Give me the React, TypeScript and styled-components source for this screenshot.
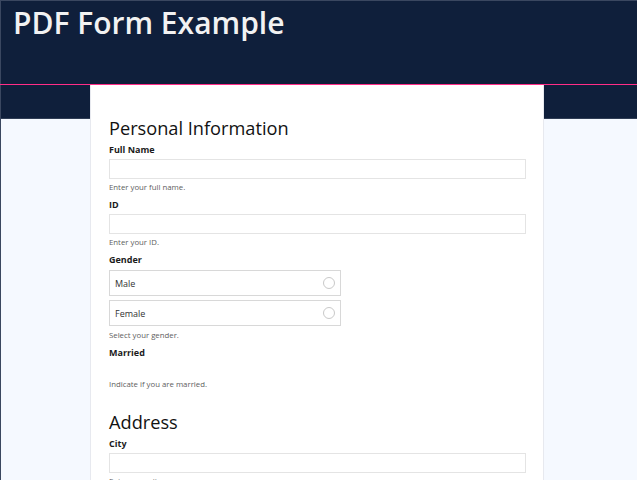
import React from "react";
import styled, { createGlobalStyle } from "styled-components";

const Global = createGlobalStyle`
  html, body { margin: 0; padding: 0; }
  body {
    font-family: "Open Sans", "Noto Sans", sans-serif;
    background: #f5f9ff;
  }
`;

const Page = styled.div`
  min-height: 480px;
  background: #f5f9ff;
`;

const Header = styled.header`
  height: 84px;
  box-sizing: border-box;
  background: #0f1f3b;
  border-top: 1px solid #3a4760;
  border-left: 1px solid #3a4760;
  padding: 2px 0 0 12px;
`;

const Accent = styled.div`
  height: 1px;
  background: #ff2d87;
`;

const Title = styled.h1`
  margin: 0;
  font-size: 30px;
  line-height: 40px;
  font-weight: 600;
  color: #f2f2f2;
  letter-spacing: 0;
`;

const Stage = styled.div`
  background: linear-gradient(to bottom, #0f1f3b 0, #0f1f3b 33px, #2f3d55 33px, #2f3d55 34px, #f5f9ff 34px);
  border-left: 1px solid #3a4760;
  padding-left: 89px;
`;

const Card = styled.main`
  width: 454px;
  box-sizing: border-box;
  background: #ffffff;
  border-left: 1px solid #e7e9ef;
  border-right: 1px solid #e7e9ef;
  padding: 31px 17px 40px 18px;
`;

const SectionTitle = styled.h2<{ $first?: boolean }>`
  margin: ${(p) => (p.$first ? "0" : "20px")} 0 4px 0;
  font-size: 18.2px;
  line-height: 24px;
  font-weight: 400;
  color: #121212;
`;

const Field = styled.div`
  display: flex;
  flex-direction: column;
  margin-bottom: 6px;
`;

const Label = styled.label`
  font-size: 9px;
  line-height: 12px;
  font-weight: 700;
  color: #1b1b1b;
  margin-bottom: 3px;
`;

const Input = styled.div`
  height: 20px;
  box-sizing: border-box;
  border: 1px solid #e4e4e4;
  background: #fff;
`;

const Help = styled.div`
  margin-top: 3px;
  font-size: 7.8px;
  line-height: 11px;
  color: #5e5e5e;
`;

const RadioGroup = styled.div`
  display: flex;
  flex-direction: column;
  gap: 4px;
  margin-top: 1px;
  margin-bottom: 1px;
`;

const RadioOption = styled.div`
  width: 232px;
  height: 26px;
  box-sizing: border-box;
  border: 1px solid #d8d8d8;
  display: flex;
  align-items: center;
  justify-content: space-between;
  padding: 0 5px 0 5px;
  font-size: 9px;
  color: #333;
`;

const Circle = styled.span`
  width: 10px;
  height: 10px;
  border: 1px solid #c9c9c9;
  border-radius: 50%;
  background: #fff;
`;

const CheckSpace = styled.div`
  height: 14px;
`;

export default function App() {
  return (
    <Page>
      <Global />
      <Header>
        <Title>PDF Form Example</Title>
      </Header>
      <Accent />
      <Stage>
        <Card>
          <SectionTitle $first>Personal Information</SectionTitle>
          <Field>
            <Label>Full Name</Label>
            <Input />
            <Help>Enter your full name.</Help>
          </Field>
          <Field>
            <Label>ID</Label>
            <Input />
            <Help>Enter your ID.</Help>
          </Field>
          <Field>
            <Label>Gender</Label>
            <RadioGroup>
              <RadioOption>
                Male
                <Circle />
              </RadioOption>
              <RadioOption>
                Female
                <Circle />
              </RadioOption>
            </RadioGroup>
            <Help>Select your gender.</Help>
          </Field>
          <Field>
            <Label>Married</Label>
            <CheckSpace />
            <Help>Indicate if you are married.</Help>
          </Field>
          <SectionTitle>Address</SectionTitle>
          <Field>
            <Label>City</Label>
            <Input />
            <Help>Enter your city.</Help>
          </Field>
        </Card>
      </Stage>
    </Page>
  );
}
